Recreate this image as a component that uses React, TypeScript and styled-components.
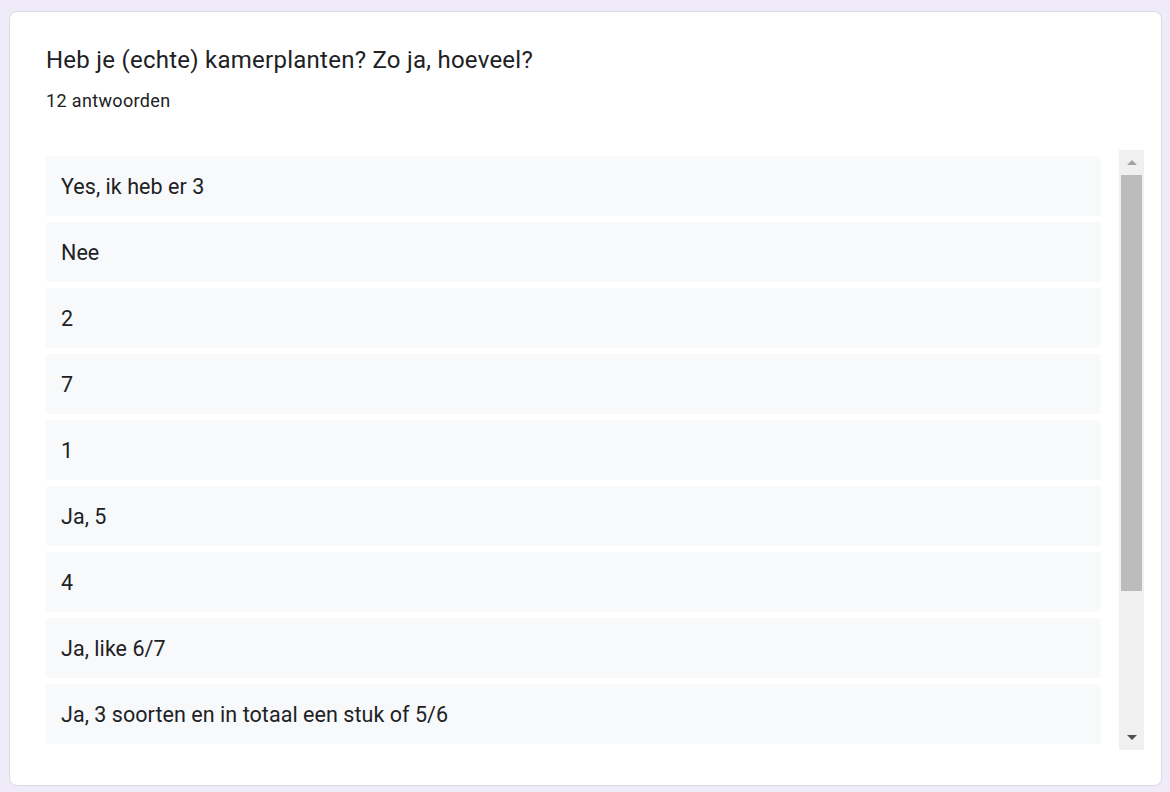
import styled, { createGlobalStyle } from "styled-components";

const answers: string[] = [
    "Yes, ik heb er 3",
    "Nee",
    "2",
    "7",
    "1",
    "Ja, 5",
    "4",
    "Ja, like 6/7",
    "Ja, 3 soorten en in totaal een stuk of 5/6",
    "Nee",
    "Ja, 2",
    "3",
];

const GlobalStyle = createGlobalStyle`
    *{
        box-sizing: border-box;
    }

    html, body{
        margin: 0;
        padding: 0;
        background: #f0ebf8;
        font-family: Roboto, "Liberation Sans", Arial, sans-serif;
        color: #202124;
    }
`;

export default function App() {
    return (
        <>
            <GlobalStyle />
            <Page>
                <Card>
                    <Title>Heb je (echte) kamerplanten? Zo ja, hoeveel?</Title>
                    <Count>12 antwoorden</Count>
                    <Responses>
                        <List>
                            {answers.map((a, i) => (
                                <Answer key={i}>{a}</Answer>
                            ))}
                        </List>
                        <Scrollbar>
                            <ScrollButton>
                                <svg width="10" height="6" viewBox="0 0 10 6"><path d="M0 6 L5 1 L10 6 Z" fill="#a3a3a3" /></svg>
                            </ScrollButton>
                            <Track>
                                <Thumb />
                            </Track>
                            <ScrollButton>
                                <svg width="10" height="6" viewBox="0 0 10 6"><path d="M0 0 L5 5 L10 0 Z" fill="#505050" /></svg>
                            </ScrollButton>
                        </Scrollbar>
                    </Responses>
                </Card>
            </Page>
        </>
    );
}

const Page = styled.div`
    width: 1170px;
    height: 792px;
    padding: 11px 8px 6px 9px;
`;

const Card = styled.section`
    height: 775px;
    background: #fff;
    border: 1px solid #dadce0;
    border-radius: 8px;
    padding: 32px 17px 0 36px;
    display: flex;
    flex-direction: column;
`;

const Title = styled.h2`
    margin: 0;
    font-size: 24px;
    font-weight: 400;
    line-height: 32px;
    letter-spacing: 0.25px;
    color: #202124;
`;

const Count = styled.div`
    margin-top: 13px;
    font-size: 18px;
    line-height: 24px;
    letter-spacing: 0.35px;
    color: #202124;
`;

const Responses = styled.div`
    margin-top: 37px;
    height: 600px;
    display: flex;
    gap: 18px;
`;

const List = styled.div`
    flex: 1;
    overflow: hidden;
    display: flex;
    flex-direction: column;
    gap: 6px;
    padding: 6px 0;
`;

const Answer = styled.div`
    flex: 0 0 60px;
    display: flex;
    align-items: center;
    padding: 0 15px;
    background: #f8f9fa;
    border-radius: 4px;
    font-size: 21.5px;
    letter-spacing: 0.05px;
    color: #202124;
`;

const Scrollbar = styled.div`
    width: 25px;
    display: flex;
    flex-direction: column;
    background: #f0f0f0;
`;

const ScrollButton = styled.div`
    flex: 0 0 24px;
    display: flex;
    align-items: center;
    justify-content: center;
`;

const Track = styled.div`
    flex: 1;
    padding: 1px 2px 0 2px;
`;

const Thumb = styled.div`
    height: 416px;
    background: #bcbcbc;
`;
